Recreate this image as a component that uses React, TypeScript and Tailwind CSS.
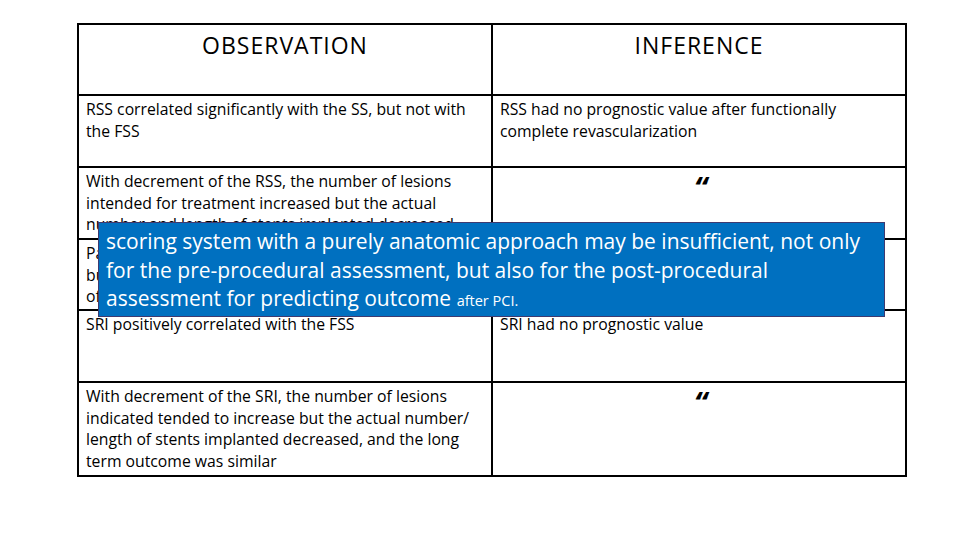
import React from 'react';

// Observation / inference rows of the slide table
const rows: { obs: string[]; inf: string[]; ditto?: boolean; h: string }[] = [
  {
    obs: ['RSS correlated significantly with the SS, but not with', 'the FSS'],
    inf: ['RSS had no prognostic value after functionally', 'complete revascularization'],
    h: 'h-[72px]',
  },
  {
    obs: [
      'With decrement of the RSS, the number of lesions',
      'intended for treatment increased but the actual',
      'number and length of stents implanted decreased',
    ],
    inf: [],
    ditto: true,
    h: 'h-[72px]',
  },
  {
    obs: [
      'Patients with a residual SYNTAX score > 0 had more events,',
      'but the difference was not significant in terms',
      'of long term outcome',
    ],
    inf: [],
    h: 'h-[71px]',
  },
  {
    obs: ['SRI positively correlated with the FSS'],
    inf: ['SRI had no prognostic value'],
    h: 'h-[72px]',
  },
  {
    obs: [
      'With decrement of the SRI, the number of lesions',
      'indicated tended to increase but the actual number/',
      'length of stents implanted decreased, and the long',
      'term outcome was similar',
    ],
    inf: [],
    ditto: true,
    h: 'h-[94px]',
  },
];

function Cell({ lines, ditto }: { lines: string[]; ditto?: boolean }) {
  return (
    <div className="w-[414px] border-b-2 border-r-2 border-black pl-[7px] pr-2 pt-[3px] text-[15.75px] leading-[21.5px] text-black">
      {ditto ? (
        <div className="text-center text-[30px] font-bold italic leading-[30px] pt-[2px] pl-[4px]">&ldquo;</div>
      ) : (
        lines.map((l, i) => (
          <div key={i} className="whitespace-nowrap">
            {l}
          </div>
        ))
      )}
    </div>
  );
}

export default function App() {
  return (
    <div className="w-[960px] h-[540px] bg-white font-['Open_Sans',sans-serif] overflow-hidden">
      <div className="pt-[23px] pl-[77px]">
        <div className="relative w-[830px]">
          <div className="border-t-2 border-l-2 border-black">
            {/* header */}
            <div className="flex h-[71px]">
              <div className="w-[414px] border-b-2 border-r-2 border-black pt-[5px] text-center text-[23px] tracking-[1px] leading-[30px] text-black">
                OBSERVATION
              </div>
              <div className="w-[414px] border-b-2 border-r-2 border-black pt-[5px] text-center text-[23px] tracking-[1px] leading-[30px] text-black">
                INFERENCE
              </div>
            </div>
            {rows.map((r, i) => (
              <div key={i} className={`flex ${r.h}`}>
                <Cell lines={r.obs} />
                <Cell lines={r.inf} ditto={r.ditto} />
              </div>
            ))}
          </div>

          {/* callout box over the table */}
          <div className="absolute left-[21px] top-[199px] w-[787px] h-[95px] bg-[#0070c0] border border-[#3e3a70] pl-[7px] pt-[4px] text-white text-[21px] leading-[28.5px]">
            <div className="whitespace-nowrap">scoring system with a purely anatomic approach may be insufficient, not only</div>
            <div className="whitespace-nowrap">for the pre-procedural assessment, but also for the post-procedural</div>
            <div className="whitespace-nowrap">
              assessment for predicting outcome <span className="text-[14.5px]">after PCI.</span>
            </div>
          </div>
        </div>
      </div>
    </div>
  );
}
